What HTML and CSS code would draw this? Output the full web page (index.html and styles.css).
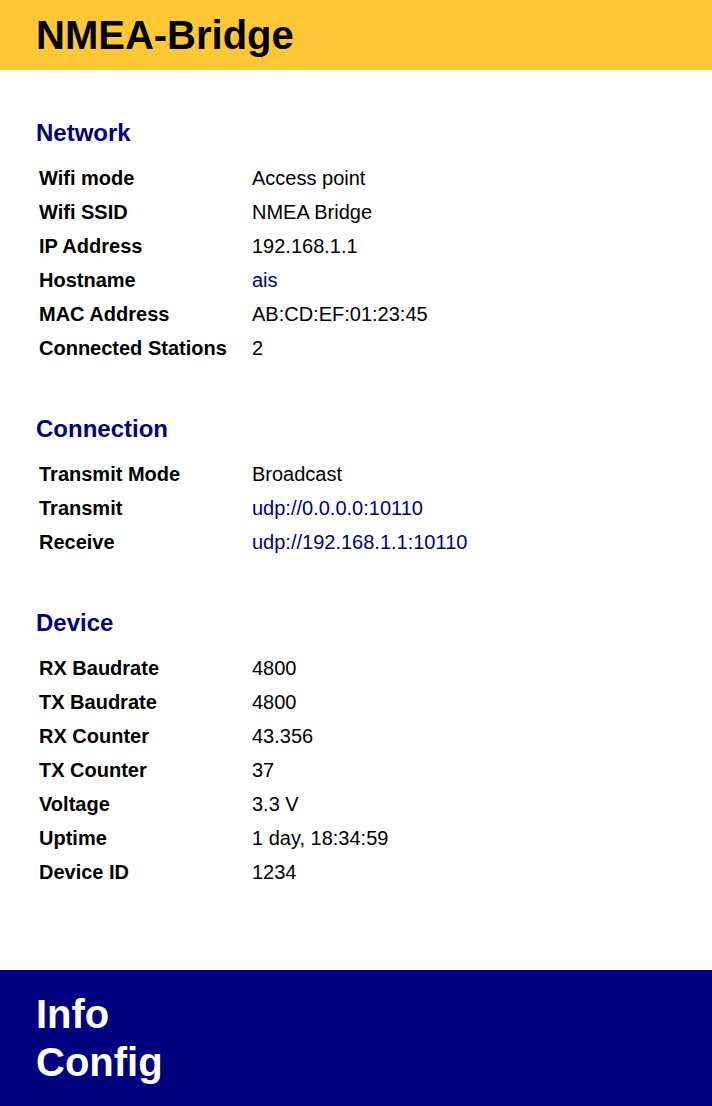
FILE: index.html
```html
<!DOCTYPE html>
<html lang="en">
<head>
<meta charset="utf-8">
<title>NMEA-Bridge</title>
<link rel="stylesheet" href="styles.css">
</head>
<body>
<header class="topbar">
  <h1 class="title">NMEA-Bridge</h1>
</header>
<main class="content">
  <section class="section">
    <h2 class="section-title">Network</h2>
    <table class="info-table">
      <tr><th>Wifi mode</th><td>Access point</td></tr>
      <tr><th>Wifi SSID</th><td>NMEA Bridge</td></tr>
      <tr><th>IP Address</th><td>192.168.1.1</td></tr>
      <tr><th>Hostname</th><td><a class="link" href="#">ais</a></td></tr>
      <tr><th>MAC Address</th><td>AB:CD:EF:01:23:45</td></tr>
      <tr><th>Connected Stations</th><td>2</td></tr>
    </table>
  </section>
  <section class="section">
    <h2 class="section-title">Connection</h2>
    <table class="info-table">
      <tr><th>Transmit Mode</th><td>Broadcast</td></tr>
      <tr><th>Transmit</th><td><a class="link" href="#">udp://0.0.0.0:10110</a></td></tr>
      <tr><th>Receive</th><td><a class="link" href="#">udp://192.168.1.1:10110</a></td></tr>
    </table>
  </section>
  <section class="section">
    <h2 class="section-title">Device</h2>
    <table class="info-table">
      <tr><th>RX Baudrate</th><td>4800</td></tr>
      <tr><th>TX Baudrate</th><td>4800</td></tr>
      <tr><th>RX Counter</th><td>43.356</td></tr>
      <tr><th>TX Counter</th><td>37</td></tr>
      <tr><th>Voltage</th><td>3.3 V</td></tr>
      <tr><th>Uptime</th><td>1 day, 18:34:59</td></tr>
      <tr><th>Device ID</th><td>1234</td></tr>
    </table>
  </section>
</main>
<footer class="footer">
  <nav class="footer-nav">
    <a class="footer-link" href="#">Info</a>
    <a class="footer-link" href="#">Config</a>
  </nav>
</footer>
</body>
</html>
```
FILE: styles.css
```css
html, body {
  margin: 0;
  padding: 0;
  background: #ffffff;
  font-family: "Liberation Sans", Arial, sans-serif;
  color: #000000;
}

.topbar {
  background: #ffc734;
  height: 70px;
  padding: 0 36px;
  display: flex;
  align-items: center;
}

.title {
  margin: 0;
  font-size: 40px;
  line-height: 46px;
  font-weight: bold;
  color: #000000;
}

.content {
  display: flex;
  flex-direction: column;
  gap: 49px;
  padding: 49px 36px 80px;
}

.section-title {
  margin: 0 0 13px;
  font-size: 24px;
  line-height: 28px;
  font-weight: bold;
  color: #000080;
}

.info-table {
  border-collapse: separate;
  border-spacing: 2px;
  font-size: 20px;
  line-height: 30px;
}

.info-table th,
.info-table td {
  padding: 1px;
  text-align: left;
  vertical-align: middle;
}

.info-table th {
  width: 209px;
  font-weight: bold;
}

.info-table td {
  font-weight: normal;
}

.link {
  color: #000080;
  text-decoration: none;
}

.footer {
  background: #000080;
  padding: 20px 36px;
}

.footer-nav {
  display: flex;
  flex-direction: column;
}

.footer-link {
  color: #ffffff;
  text-decoration: none;
  font-size: 40px;
  line-height: 48px;
  font-weight: bold;
}
```
